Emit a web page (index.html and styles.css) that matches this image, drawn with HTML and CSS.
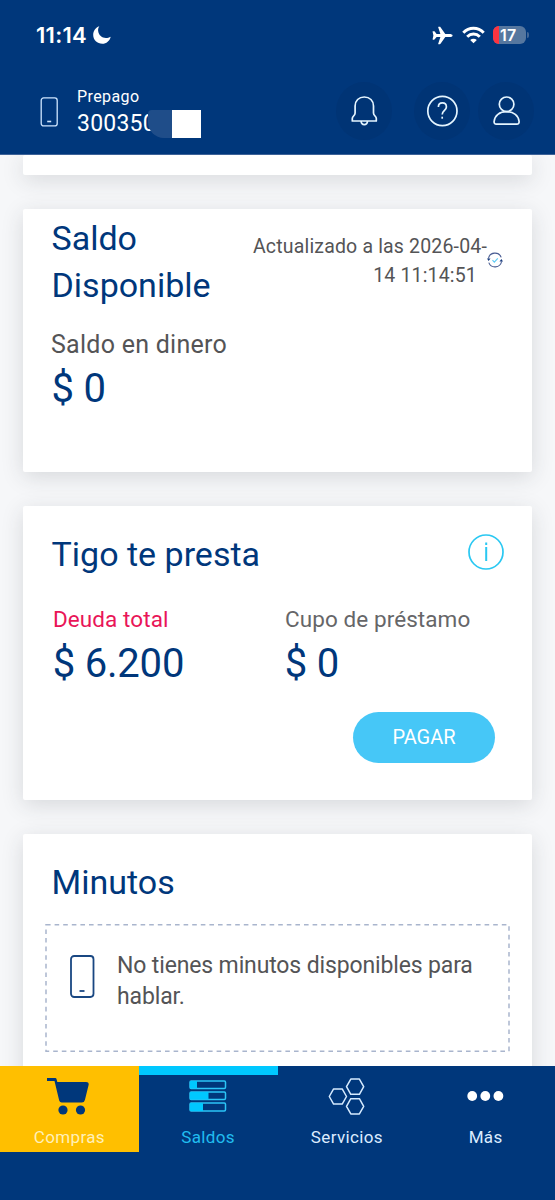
FILE: index.html
```html
<!DOCTYPE html>
<html lang="es">
<head>
<meta charset="utf-8">
<title>Saldos</title>
<link rel="stylesheet" href="styles.css">
</head>
<body>
<header class="header">
  <div class="status">
    <span class="clock">11:14</span>
    <svg class="moon" width="18" height="18" viewBox="0 0 18 18"><path fill="#fff" d="M6.300.3C5.200 2 4.900 3.500 5.200 5.200c.6 4 3.900 6.700 7.700 6.700 1.700 0 3.200-.3 4.800-1.200C16.700 15 13.400 17.700 9.300 17.700 4.300 17.700.2 13.800.2 8.900.2 5 2.700 1.500 6.300.3z"/></svg>
    <div class="signals">
      <svg width="21" height="19" viewBox="0 0 21 19"><path fill="#fff" d="M20.600 9.500c0 1-1.600 1.500-3 1.500h-4.300l-4.800 6.800c-.2.300-.4.400-.8.400h-1.200c-.3 0-.4-.2-.3-.5L8.400 11H4.600l-1.900 2.300c-.2.300-.4.400-.7.400H1c-.3 0-.4-.2-.4-.4l.8-3.800L.6 5.700c0-.3.100-.4.400-.4h1c.3 0 .5.100.7.300L4.600 8h3.800L6.200 1.300c-.1-.3 0-.5.300-.5h1.200c.4 0 .6.100.8.400L13.300 8h4.300c1.400 0 3 .5 3 1.500z"/></svg>
      <svg width="23" height="18" viewBox="0 0 23 18"><g fill="none" stroke="#fff" stroke-width="3"><path d="M1.300 6.700C7 .9 16 .9 21.700 6.700"/><path d="M5.200 10.800c3.600-3.600 9-3.600 12.600 0"/></g><path fill="#fff" d="M11.500 17.300 8.200 13.900c1.800-1.700 4.800-1.700 6.600 0z"/></svg>
      <div class="battery"><span class="level"></span><span class="percent">17</span></div>
      <span class="battery-tip"></span>
    </div>
  </div>
  <div class="account">
    <svg class="line-icon" width="18" height="30" viewBox="0 0 18 30" fill="none" stroke="#cfe6ff" stroke-width="1.300"><rect x="1.200" y=".9" width="16" height="28" rx="2.500"/><path d="M7.200 24.500h4" stroke-width="1.600"/></svg>
    <div class="line">
      <span class="plan">Prepago</span>
      <span class="number">300350<span class="mask"></span></span>
    </div>
    <div class="actions">
      <span class="action bell"><svg width="28" height="30" viewBox="0 0 28 30" fill="none" stroke="#e4f5ff" stroke-width="1.700" stroke-linejoin="round"><path d="M14.300 1C8.800 1 5.100 4.700 5.100 10v7c0 2.600-2.800 3.300-2.800 5.400V25h24v-2.600c0-2.100-2.800-2.800-2.800-5.400v-7C23.500 4.700 19.800 1 14.300 1z"/><path d="M11.100 25c.2 4.800 6.200 4.800 6.400 0"/></svg></span>
      <span class="action help"><svg width="32" height="32" viewBox="0 0 32 32" fill="none" stroke="#e4f5ff" stroke-width="1.700"><circle cx="16.400" cy="16" r="14.600"/><path d="M12.400 12c0-5.400 8-5.400 8 0 0 3.200-4.200 3.500-4.200 7.400"/><path d="M16.200 21.700v2"/></svg></span>
      <span class="action"><svg width="28" height="30" viewBox="0 0 28 30" fill="none" stroke="#e4f5ff" stroke-width="1.700"><circle cx="14.600" cy="8.300" r="7.300"/><path d="M2.100 25.500C2.600 19.500 7.600 15.700 14.600 15.700S26.600 19.500 27.100 25.500c.1 1.800-.7 2.700-2.300 2.700H4.400c-1.600 0-2.400-.9-2.300-2.700z"/></svg></span>
    </div>
  </div>
</header>
<main class="content">
  <section class="card card-end"></section>
  <section class="card balance">
    <div class="balance-head">
      <h2 class="title">Saldo Disponible</h2>
      <p class="updated"><span>Actualizado a las 2026-04-</span><span class="time">14 11:14:51</span></p>
      <svg class="refresh" width="16" height="16" viewBox="0 0 16 16" fill="none"><path d="M1.400 6.500A6.700 6.700 0 0 1 14.200 5.400M14.600 9.500A6.700 6.700 0 0 1 1.800 10.600" stroke="#4a5d93" stroke-width="1.100"/><path d="M0 6.500h3.500L1.600 9zM16 9.500h-3.500L14.400 7z" fill="#163a7d"/><path d="m5.500 8.200 1.800 1.900 3.500-3.800" stroke="#5ecbf5" stroke-width="1.200"/></svg>
    </div>
    <p class="label">Saldo en dinero</p>
    <p class="amount">$ 0</p>
  </section>
  <section class="card loan">
    <div class="loan-head">
      <h2 class="title">Tigo te presta</h2>
      <svg width="36" height="36" viewBox="0 0 36 36" fill="none" stroke="#2ac8f2" stroke-width="1.700"><circle cx="18" cy="18" r="17"/><path d="M18.200 13v14M18.200 8.500v2.600" stroke-width="2"/></svg>
    </div>
    <div class="loan-values">
      <div><p class="small debt">Deuda total</p><p class="amount">$ 6.200</p></div>
      <div><p class="small">Cupo de préstamo</p><p class="amount">$ 0</p></div>
    </div>
    <button class="pay">PAGAR</button>
  </section>
  <section class="card minutes">
    <h2 class="title">Minutos</h2>
    <div class="empty">
      <svg width="25" height="43" viewBox="0 0 25 43" fill="none" stroke="#194782" stroke-width="1.800"><rect x="1" y="1" width="22.500" height="41" rx="3.200"/><path d="M9.500 36h5"/></svg>
      <p class="message">No tienes minutos disponibles para hablar.</p>
      <svg class="dashes" width="465" height="129"><rect x="1" y=".8" width="463" height="126.400" fill="none" stroke="#a9b5cd" stroke-width="1.500" stroke-dasharray="4.600 4"/></svg>
    </div>
  </section>
</main>
<nav class="nav">
  <a class="tab shop"><svg width="42" height="37" viewBox="0 0 42 37"><path fill="#00377b" d="M0 0h8.300q1 0 1.200 1l.8 3H39q3.200 0 2.600 3l-3.700 15q-.7 2.500-3 2.500H14.700q-2 0-2.500-2L7.500 3H0z"/><circle cx="16" cy="32" r="4.600" fill="#00377b"/><circle cx="33.500" cy="32" r="4.600" fill="#00377b"/></svg><span class="tab-name">Compras</span></a>
  <a class="tab current"><svg width="38" height="32" viewBox="0 0 38 32" fill="none" stroke="#2bc5f7" stroke-width="1.500"><rect x="1" y="1" width="35.500" height="7.500" rx="1.200"/><rect x="1" y="12" width="35.500" height="7.500" rx="1.200"/><rect x="1" y="23" width="35.500" height="8" rx="1.200"/><path fill="#00c8ff" stroke="none" d="M1 1h7v7.500H1zM1 12h18.500v7.500H1zM1 23h13v8H1z"/></svg><span class="tab-name">Saldos</span></a>
  <a class="tab"><svg width="37" height="37" viewBox="0 0 37 37" fill="none" stroke="#d6ebff" stroke-width="1.500" stroke-linejoin="round"><path id="cell" d="m18.500 8.700 4.300-7.600h8.600l4.300 7.600-4.300 7.600h-8.600z"/><use href="#cell" y="19.600"/><use href="#cell" x="-17.200" y="9.800"/></svg><span class="tab-name">Servicios</span></a>
  <a class="tab"><svg width="37" height="10" viewBox="0 0 37 10" fill="#fff"><circle cx="5.200" cy="5" r="4.900"/><circle cx="18.300" cy="5" r="4.900"/><circle cx="31.400" cy="5" r="4.900"/></svg><span class="tab-name">Más</span></a>
</nav>
</body>
</html>
```
FILE: styles.css
```css
* { box-sizing: border-box; margin: 0; padding: 0; }
body { width: 555px; height: 1200px; overflow: hidden; display: flex; flex-direction: column; font-family: Roboto, "Liberation Sans", sans-serif; background: #f6f7f9; }
svg { display: block; flex: none; }

.header { height: 155px; flex: none; background: #00377b; color: #fff; position: relative; border-bottom: 1px solid #3d6298; }
.status { display: flex; align-items: center; height: 24px; margin-top: 23px; padding-left: 36px; padding-right: 26px; }
.clock { font: 600 22px/24px Inter, sans-serif; letter-spacing: 0.3px; width: 57px; }
.signals { margin-left: auto; display: flex; align-items: center; }
.signals svg + svg { margin-left: 9px; margin-right: 8px; }
.battery { width: 33px; height: 18px; border-radius: 6px; background: #56779f; overflow: hidden; display: flex; }
.level { width: 6px; background: #fc3440; }
.percent { font: 600 16px/18px Inter, sans-serif; padding-left: 1px; letter-spacing: 0.3px; }
.battery-tip { width: 2px; height: 6px; margin-left: 1px; border-radius: 0 2px 2px 0; background: #426797; }

.account { display: flex; align-items: flex-start; margin-top: 35px; padding: 0 21px 0 40px; }
.line-icon { margin-top: 15px; margin-right: 19px; }
.line { display: flex; flex-direction: column; padding-top: 4px; }
.plan { font-size: 16px; line-height: 22px; letter-spacing: 0.4px; }
.number { font-size: 23px; line-height: 31px; letter-spacing: 0.2px; position: relative; }
.mask { position: absolute; left: 71px; top: 2px; width: 53px; height: 28px; border-radius: 4px 0 0 16px; background: linear-gradient(90deg, #1f4d89 24px, #fff 24px); }
.actions { margin-left: auto; display: flex; }
.action { width: 56px; height: 58px; border-radius: 50%; background: #003475; display: flex; align-items: center; justify-content: center; }
.bell { margin-right: 22px; }
.help { margin-right: 8px; }

.content { height: 911px; flex: none; overflow: hidden; padding: 0 23px; display: flex; flex-direction: column; gap: 34px; }
.card { background: #fff; border-radius: 2px; box-shadow: 0 5px 22px rgba(40, 45, 55, 0.15); flex: none; padding: 0 29px; }
.card-end { height: 20px; }
.title { font-size: 34px; line-height: 47px; font-weight: 400; color: #00377b; margin-left: -0.5px; }
.amount { font-size: 40px; line-height: 46px; letter-spacing: -0.2px; color: #00377b; }
.balance { height: 263px; padding-top: 6px; }
.balance-head { display: flex; }
.balance-head .title { width: 190px; }
.updated { margin-left: auto; padding-top: 18px; font-size: 19.500px; letter-spacing: 0.17px; line-height: 28.500px; color: #545456; text-align: right; white-space: nowrap; }
.updated span { display: block; }
.updated .time { padding-right: 10px; }
.refresh { margin: 37px 0 0; }
.label { margin-top: 21px; margin-left: -1px; font-size: 25px; line-height: 30px; letter-spacing: 0.26px; color: #545456; }
.label + .amount { margin-top: 6px; margin-left: -0.5px; }

.loan { height: 294px; padding-top: 25px; display: flex; flex-direction: column; }
.loan-head { display: flex; justify-content: space-between; align-items: flex-start; height: 47px; }
.loan-head svg { margin-top: 3px; margin-right: -1px; }
.loan-values { display: flex; margin-top: 26px; padding-left: 0.7px; }
.loan-values div { width: 232px; flex: none; }
.small { padding-left: 0.3px; font-size: 22.500px; line-height: 30px; letter-spacing: 0.08px; color: #666668; margin-bottom: 7px; white-space: nowrap; }
.debt { color: #e91558; }
.pay { align-self: flex-end; margin-top: 25px; margin-right: 8px; width: 142px; height: 51px; padding-bottom: 2px; border: 0; border-radius: 26px; background: #46c7f7; color: #fff; font: 400 20px/24px Roboto, sans-serif; }

.minutes { height: 260px; padding: 25px 22px 0; }
.minutes .title { padding-left: 7px; }
.empty { position: relative; height: 128px; margin-top: 18px; padding: 26px 20px 0 25px; display: flex; align-items: flex-start; }
.empty svg { margin-top: 5px; }
.empty .dashes { position: absolute; left: 0; top: 0; margin: 0; }
.message { margin-left: 22px; font-size: 23px; letter-spacing: -0.14px; line-height: 31px; color: #545456; }

.nav { display: flex; height: 134px; flex: none; background: #00377b; color: #dcecff; position: relative; }
.tab { width: 138.750px; height: 86px; display: grid; grid-template-rows: 60px 22px; justify-items: center; align-items: center; align-content: start; }
.tab-name { font-size: 17px; line-height: 22px; letter-spacing: 0.35px; }
.shop { background: #ffbf00; color: #fff0b8; }
.shop svg { margin-right: 3px; }
.current { color: #20bdf0; border-top: 9px solid #00c8ff; grid-template-rows: 51px 22px; }
.current svg { margin-top: -9px; }
```
